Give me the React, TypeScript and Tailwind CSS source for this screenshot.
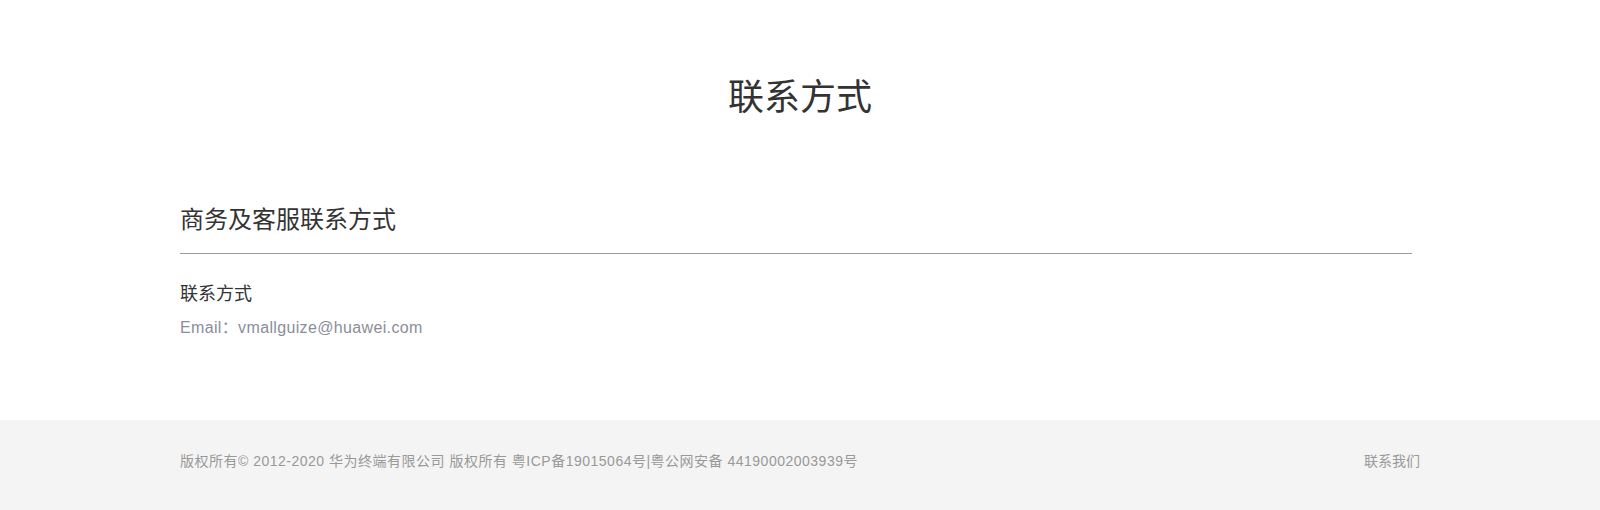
import React from "react";

export default function App() {
  const font = { fontFamily: '"Liberation Sans", "Noto Sans CJK SC", sans-serif' };
  return (
    <div className="w-full bg-white" style={font}>
      <div className="w-[1240px] mx-auto">
        <h1 className="pt-[74px] text-center text-[36px] leading-[48px] text-[#333] font-normal">联系方式</h1>
        <div className="mt-[82px] mr-[8px]">
          <h2 className="text-[24px] leading-[32px] text-[#333] pb-[17px] border-b border-[#999]">商务及客服联系方式</h2>
          <div className="pt-[27px] text-[18px] leading-[26px] text-[#333]">联系方式</div>
          <div className="mt-[9px] text-[16px] leading-[24px] tracking-[0.35px] text-[#8a8e99]">Email：vmallguize@huawei.com</div>
        </div>
      </div>
      <div className="mt-[80px] bg-[#f4f4f4] h-[91px]">
        <div className="w-[1240px] mx-auto flex justify-between items-center h-full pb-[8px] text-[14px] text-[#999]">
          <span className="tracking-[0.5px]">版权所有© 2012-2020 华为终端有限公司 版权所有 粤ICP备19015064号|粤公网安备 44190002003939号</span>
          <span>联系我们</span>
        </div>
      </div>
    </div>
  );
}
